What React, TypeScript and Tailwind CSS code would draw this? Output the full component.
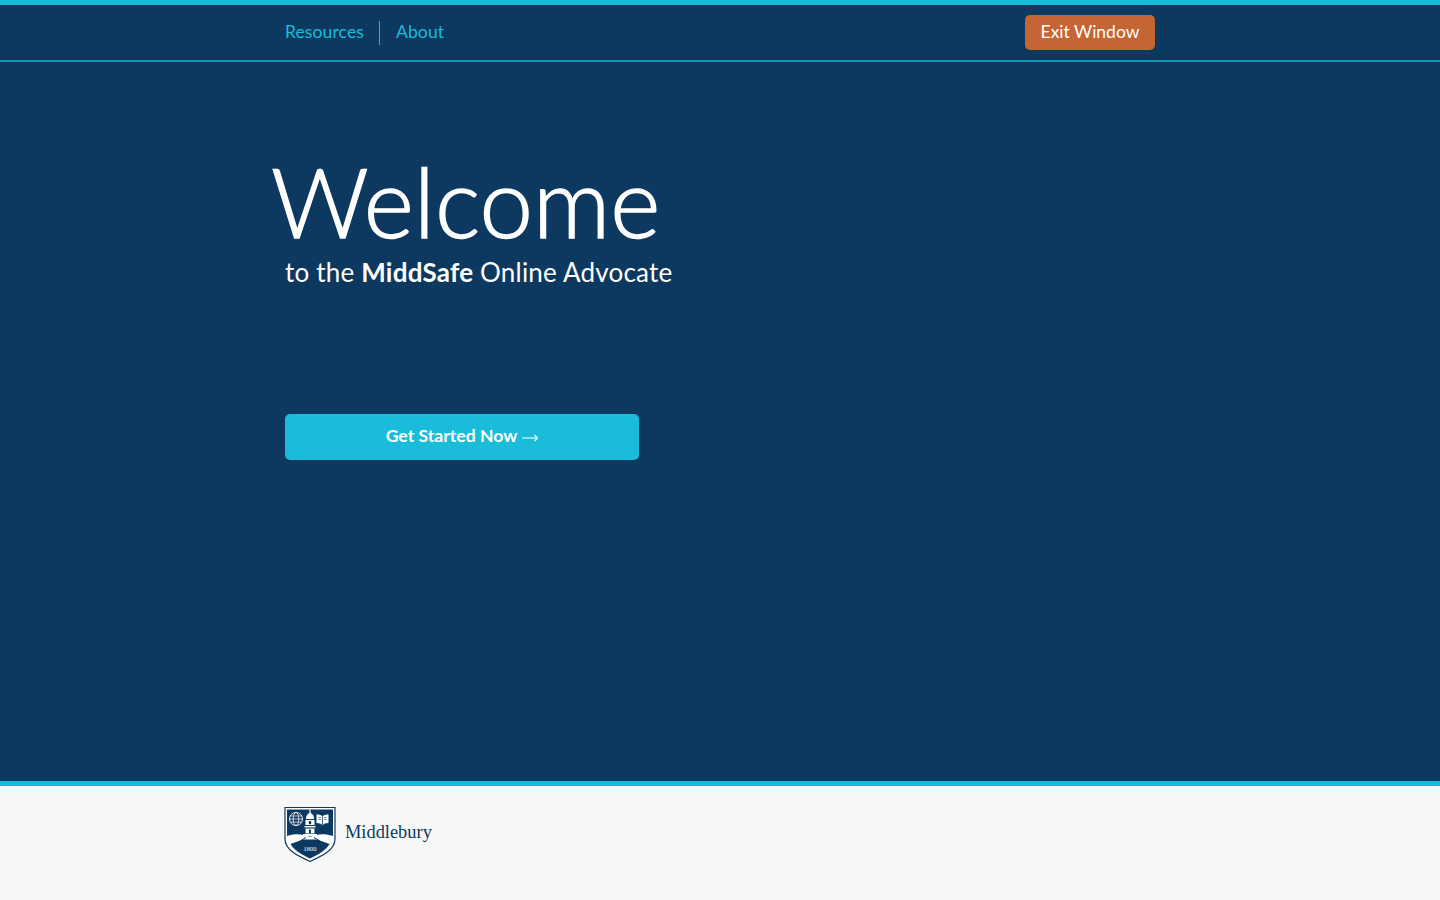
import React from 'react';

const sans = 'font-["Lato","Open_Sans",sans-serif]';

const Crest = () => (
  <svg width="52" height="56" viewBox="0 0 52 56" className="block">
    {/* shield */}
    <path d="M1 1.5H51V33C51 44 38 50 26 55.5C14 50 1 44 1 33Z" fill="#fff" stroke="#0d3860" strokeWidth="1.2" />
    <path d="M3 3.5H49V30C40 27 33 28 26 31C19 28 11 27 3 30Z" fill="#0d3860" />
    <path d="M6.5 38L19 33.5H33L45.5 38C43 43 36 48 26 52.5C16 48 9 43 6.5 38Z" fill="#0d3860" />
    <path d="M13 37L22 31.5M39 37L30 31.5" stroke="#0d3860" strokeWidth="1" />
    {/* globe */}
    <circle cx="12" cy="13" r="6.5" fill="none" stroke="#fff" strokeWidth="0.9" />
    <ellipse cx="12" cy="13" rx="2.8" ry="6.5" fill="none" stroke="#fff" strokeWidth="0.7" />
    <path d="M5.5 13H18.5M6.5 10H17.5M6.5 16H17.5" stroke="#fff" strokeWidth="0.7" />
    {/* cupola */}
    <path d="M26 3.5V7" stroke="#fff" strokeWidth="1.2" />
    <path d="M22 13C22 9.5 24 7 26 7C28 7 30 9.5 30 13Z" fill="#fff" />
    <rect x="21.5" y="14" width="9" height="5" fill="#fff" />
    <rect x="24.8" y="15" width="2.4" height="3.2" fill="#0d3860" />
    <rect x="20.5" y="20" width="11" height="1.4" fill="#fff" />
    <rect x="21.5" y="22.5" width="9" height="5" fill="#fff" />
    <rect x="25" y="23.5" width="2" height="4" fill="#0d3860" />
    <rect x="19" y="28" width="14" height="2.4" fill="#fff" />
    {/* book */}
    <path d="M32.5 8.5C35.5 8.5 37.5 9 38.5 10.5C39.5 9 41.5 8.5 44.5 8.5V17C41.5 17 39.5 17.8 38.5 19.5C37.5 17.8 35.5 17 32.5 17Z" fill="#fff" />
    <path d="M38.5 10.5V19.5" stroke="#0d3860" strokeWidth="0.8" />
    <path d="M34.5 11.5H37M34.5 13.5H37M40 11.5H42.5M40 13.5H42.5" stroke="#0d3860" strokeWidth="0.6" />
    <text x="26" y="44.5" textAnchor="middle" fontSize="6.5" fill="#fff" fontFamily="'Liberation Serif', serif">1800</text>
  </svg>
);

const App: React.FC = () => {
  return (
    <div className={`flex flex-col h-[900px] overflow-hidden bg-[#f7f7f7] ${sans}`}>
      {/* banda superior */}
      <div className="h-[5px] bg-[#19bdd9]" />
      <header className="h-[57px] shrink-0 bg-[#0d3860] border-b-2 border-[#1398b8]">
        <div className="w-[870px] ml-[285px] h-full flex items-center justify-between">
          <nav className="flex items-center text-[17.5px] text-[#19bdd9] tracking-[0.12px]">
            <a className="pr-[15px] leading-6 -translate-y-px">Resources</a>
            <span className="w-px h-6 bg-[#19bdd9]" />
            <a className="pl-4 leading-6 -translate-y-px">About</a>
          </nav>
          <button className="w-[130px] h-[35px] rounded-[5px] bg-[#c56533] text-white text-[17.5px]">
            Exit Window
          </button>
        </div>
      </header>

      <main className="flex-1 bg-[#0d3860] pl-[285px]">
        <h1 className="-ml-[14px] mt-[79px] text-[96px] leading-[120px] font-light text-white [-webkit-text-stroke:1.4px_white]">
          Welcome
        </h1>
        <p className="-mt-[5px] text-[26px] leading-8 font-normal text-white tracking-[0.2px]">
          to the <strong className="font-bold">MiddSafe</strong> Online Advocate
        </p>
        <button className="mt-[126px] w-[354px] h-[46px] rounded-[5px] bg-[#19bdd9] text-white text-[17.6px] font-bold">
          <span className="inline-flex items-center gap-[5px]">
            <span className="-translate-y-px">Get Started Now</span>
            <svg width="16" height="8" viewBox="0 0 16 8" fill="none" stroke="#fff" strokeWidth="1.1" className="mt-[2px]">
              <path d="M0 4H15.5M12.5 1L15.5 4L12.5 7" />
            </svg>
          </span>
        </button>
      </main>

      <div className="h-[5px] bg-[#19bdd9]" />
      <footer className="h-[114px] shrink-0 pl-[284px] pt-5 flex items-start gap-[9px]">
        <Crest />
        <span className='mt-[14px] text-[18.4px] leading-6 text-[#0d3860] font-["Liberation_Serif",serif]'>Middlebury</span>
      </footer>
    </div>
  );
};

export default App;
